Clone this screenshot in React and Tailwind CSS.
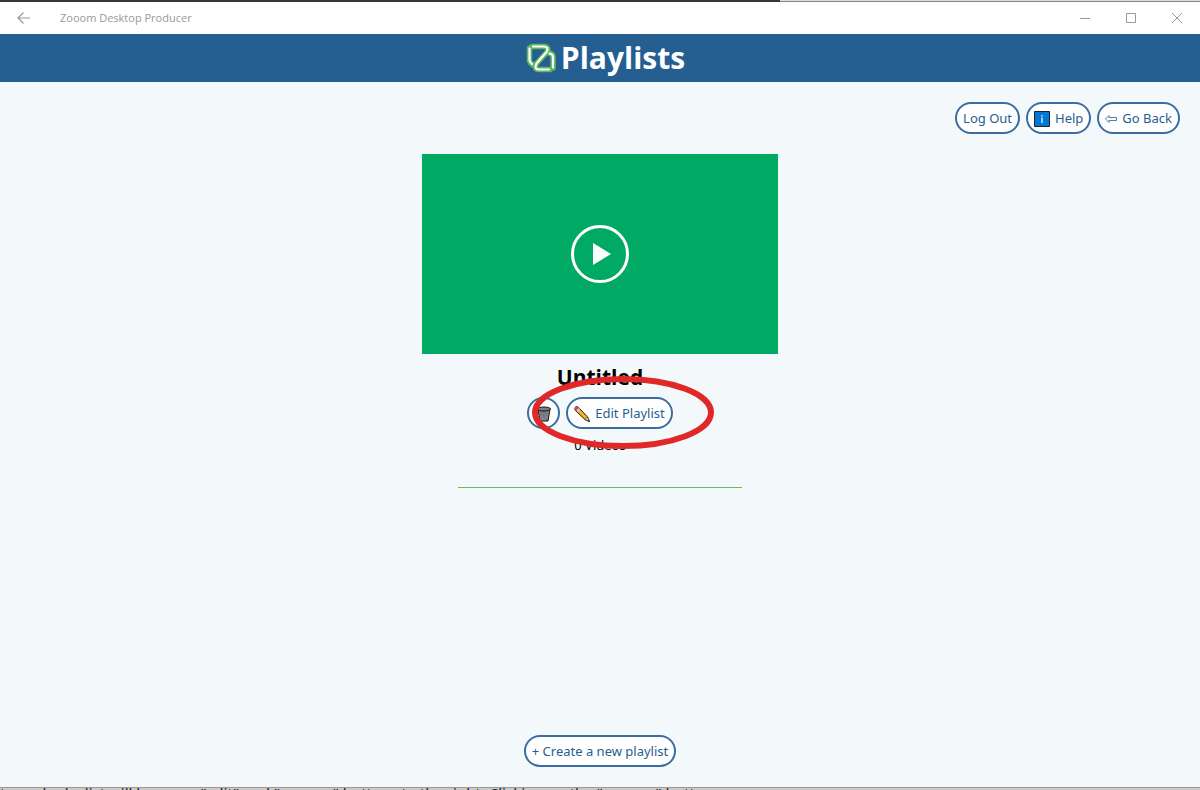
const pill =
  "flex h-8 items-center justify-center whitespace-nowrap rounded-full border-2 border-[#3b6ea0] bg-white px-[6px] pt-[2px] text-[13px] text-[#255e91]";

function Logo() {
  return (
    <svg className="h-8 w-8" viewBox="0 0 32 32" fill="none" aria-hidden="true" strokeLinejoin="round" strokeLinecap="round">
      <g stroke="#5fb760" strokeWidth="5.500">
        <path d="M7 4.500H20Q24.500 5.500 22 10L11.500 21.500Q8.500 27.500 14 27.500H25" />
        <path d="M4.500 6V19Q5 21 8 23" />
        <path d="M24.500 11Q28 12 28 15V26" />
      </g>
      <g stroke="#fff" strokeWidth="2.200">
        <path d="M8 4.500H19Q24.500 5 21.500 10L11.500 21.500Q8.500 27.500 14 27.500H24" />
        <path d="M4.500 6.500V18Q4.500 20 7 22" />
        <path d="M24.500 11.500Q28 12 28 15V25.500" />
      </g>
    </svg>
  );
}

function Trash() {
  return (
    <svg className="h-4 w-4" viewBox="0 0 16 16" aria-hidden="true">
      <path d="M2 3 4 15H12L14 3Z" fill="#858b90" stroke="#111" />
      <path d="M4 5 11 14M7 4l5 7M12 5 5 13M9 4 4 10" stroke="#5c6267" strokeWidth=".8" />
      <ellipse cx="8" cy="3" rx="6.500" ry="2" fill="#777e84" stroke="#111" />
    </svg>
  );
}

function Pencil() {
  return (
    <svg className="h-4 w-4" viewBox="0 0 16 16" aria-hidden="true">
      <path d="M1 1.500Q2 0 4 1L13.500 11 15.500 15.500 11 13.500 1 4Z" fill="#ffb916" stroke="#111" />
      <path d="M1 1.500Q2 0 4 1L5 2 2.500 5 1 4Z" fill="#ef4657" />
      <path d="M5 2 2.500 5 4 6 6 3.500Z" fill="#c9d5da" />
      <path d="m11 13.500 2.500-2.500 2 4.500Z" fill="#f7d7aa" stroke="#111" strokeWidth=".5" />
      <path d="m14 14 1.500 1.500-2-.5Z" fill="#111" />
    </svg>
  );
}

export default function App() {
  return (
    <div className="flex h-screen flex-col overflow-hidden bg-[#f3f8fb] font-['Noto_Sans','Open_Sans',sans-serif] text-black">
      <div className="flex h-[2px] shrink-0">
        <div className="w-[65%] bg-[#383637]" />
        <div className="flex-1 border-b border-[#888] bg-[#dedede]" />
      </div>
      <div className="flex h-8 shrink-0 items-center bg-white pl-4 text-[#999]">
        <button aria-label="Back" className="flex w-4 justify-center">
          <svg className="h-4 w-4" viewBox="0 0 16 16" fill="none" stroke="currentColor" strokeWidth="1.200" aria-hidden="true">
            <path d="M14 8H2M7.500 2.500 2 8l5.500 5.500" />
          </svg>
        </button>
        <span className="ml-7 flex-1 font-['Open_Sans','Noto_Sans',sans-serif] text-[11px]">Zooom Desktop Producer</span>
        <button aria-label="Minimize" className="flex w-[46px] justify-center">
          <svg className="h-3 w-3" viewBox="0 0 12 12" stroke="currentColor" aria-hidden="true"><path d="M1 6.500H11" /></svg>
        </button>
        <button aria-label="Maximize" className="flex w-[46px] justify-center">
          <svg className="h-3 w-3" viewBox="0 0 12 12" fill="none" stroke="currentColor" aria-hidden="true"><path d="M1.500 1.500H10.500V10.500H1.500Z" /></svg>
        </button>
        <button aria-label="Close" className="flex w-[46px] justify-center">
          <svg className="h-3 w-3" viewBox="0 0 12 12" stroke="currentColor" aria-hidden="true"><path d="m1 1 10 10M11 1 1 11" /></svg>
        </button>
      </div>
      <header className="flex h-12 shrink-0 items-center justify-center gap-1 bg-[#255e91] pl-[10px] text-white">
        <Logo />
        <h1 className="font-['Open_Sans','Noto_Sans',sans-serif] text-3xl font-bold">Playlists</h1>
      </header>
      <nav className="flex shrink-0 justify-end gap-[6px] px-5 pt-5">
        <button className={pill}>Log Out</button>
        <button className={pill}>
          <svg className="mr-[5px] h-4 w-4" viewBox="0 0 16 16" aria-hidden="true">
            <path d="M.5.500H15.500V15.500H.5Z" fill="#0078d7" stroke="#222" />
            <path d="M8 4V5.500M8 6.500V12" stroke="#fff" strokeWidth="1.200" />
          </svg>
          Help
        </button>
        <button className={pill}>
          <svg className="mr-[5px] h-3 w-3" viewBox="0 0 12 12" fill="none" stroke="currentColor" strokeWidth=".8" aria-hidden="true">
            <path d="M.5 6 4 2.500V4.500H11.500V7.500H4V9.500Z" />
          </svg>
          Go Back
        </button>
      </nav>
      <main className="flex flex-1 flex-col items-center pt-5">
        <button aria-label="Play Untitled" className="flex h-[200px] w-[356px] items-center justify-center bg-[#00aa64]">
          <svg className="h-[60px] w-[60px]" viewBox="0 0 60 60" aria-hidden="true">
            <circle cx="30" cy="30" r="27.500" fill="none" stroke="#fff" strokeWidth="3" />
            <path d="M23 19V41L41 30Z" fill="#fff" />
          </svg>
        </button>
        <h2 className="mt-[9px] font-['Open_Sans','Noto_Sans',sans-serif] text-[21px] font-bold leading-7">Untitled</h2>
        <div className="relative mt-[6px] flex gap-[6px]">
          <button aria-label="Delete playlist" className={pill + " w-[33px]"}><Trash /></button>
          <button className={pill}>
            <span className="mr-[5px]"><Pencil /></span>Edit Playlist
          </button>
          <svg className="pointer-events-none absolute -top-[22px] left-[3px] z-10 h-[74px] w-[186px]" viewBox="0 0 186 74" fill="none" aria-hidden="true">
            <ellipse cx="93" cy="37.500" rx="88" ry="33.500" stroke="#e12828" strokeWidth="6" />
          </svg>
        </div>
        <p className="mt-[6px] text-[13px] leading-5">0 Videos</p>
        <hr className="mt-8 w-[284px] border-[#69c052]" />
      </main>
      <footer className="flex shrink-0 justify-center pb-5">
        <button className={pill}>+ Create a new playlist</button>
      </footer>
      <div className="h-[3px] shrink-0 overflow-hidden border-t border-[#999] bg-[#cacaca] text-[15px] leading-[11px] text-[#222]">
        <p className="whitespace-nowrap">to each playlist will be some "edit" and "remove" buttons to the right. Clicking on the "remove" button</p>
      </div>
    </div>
  );
}
